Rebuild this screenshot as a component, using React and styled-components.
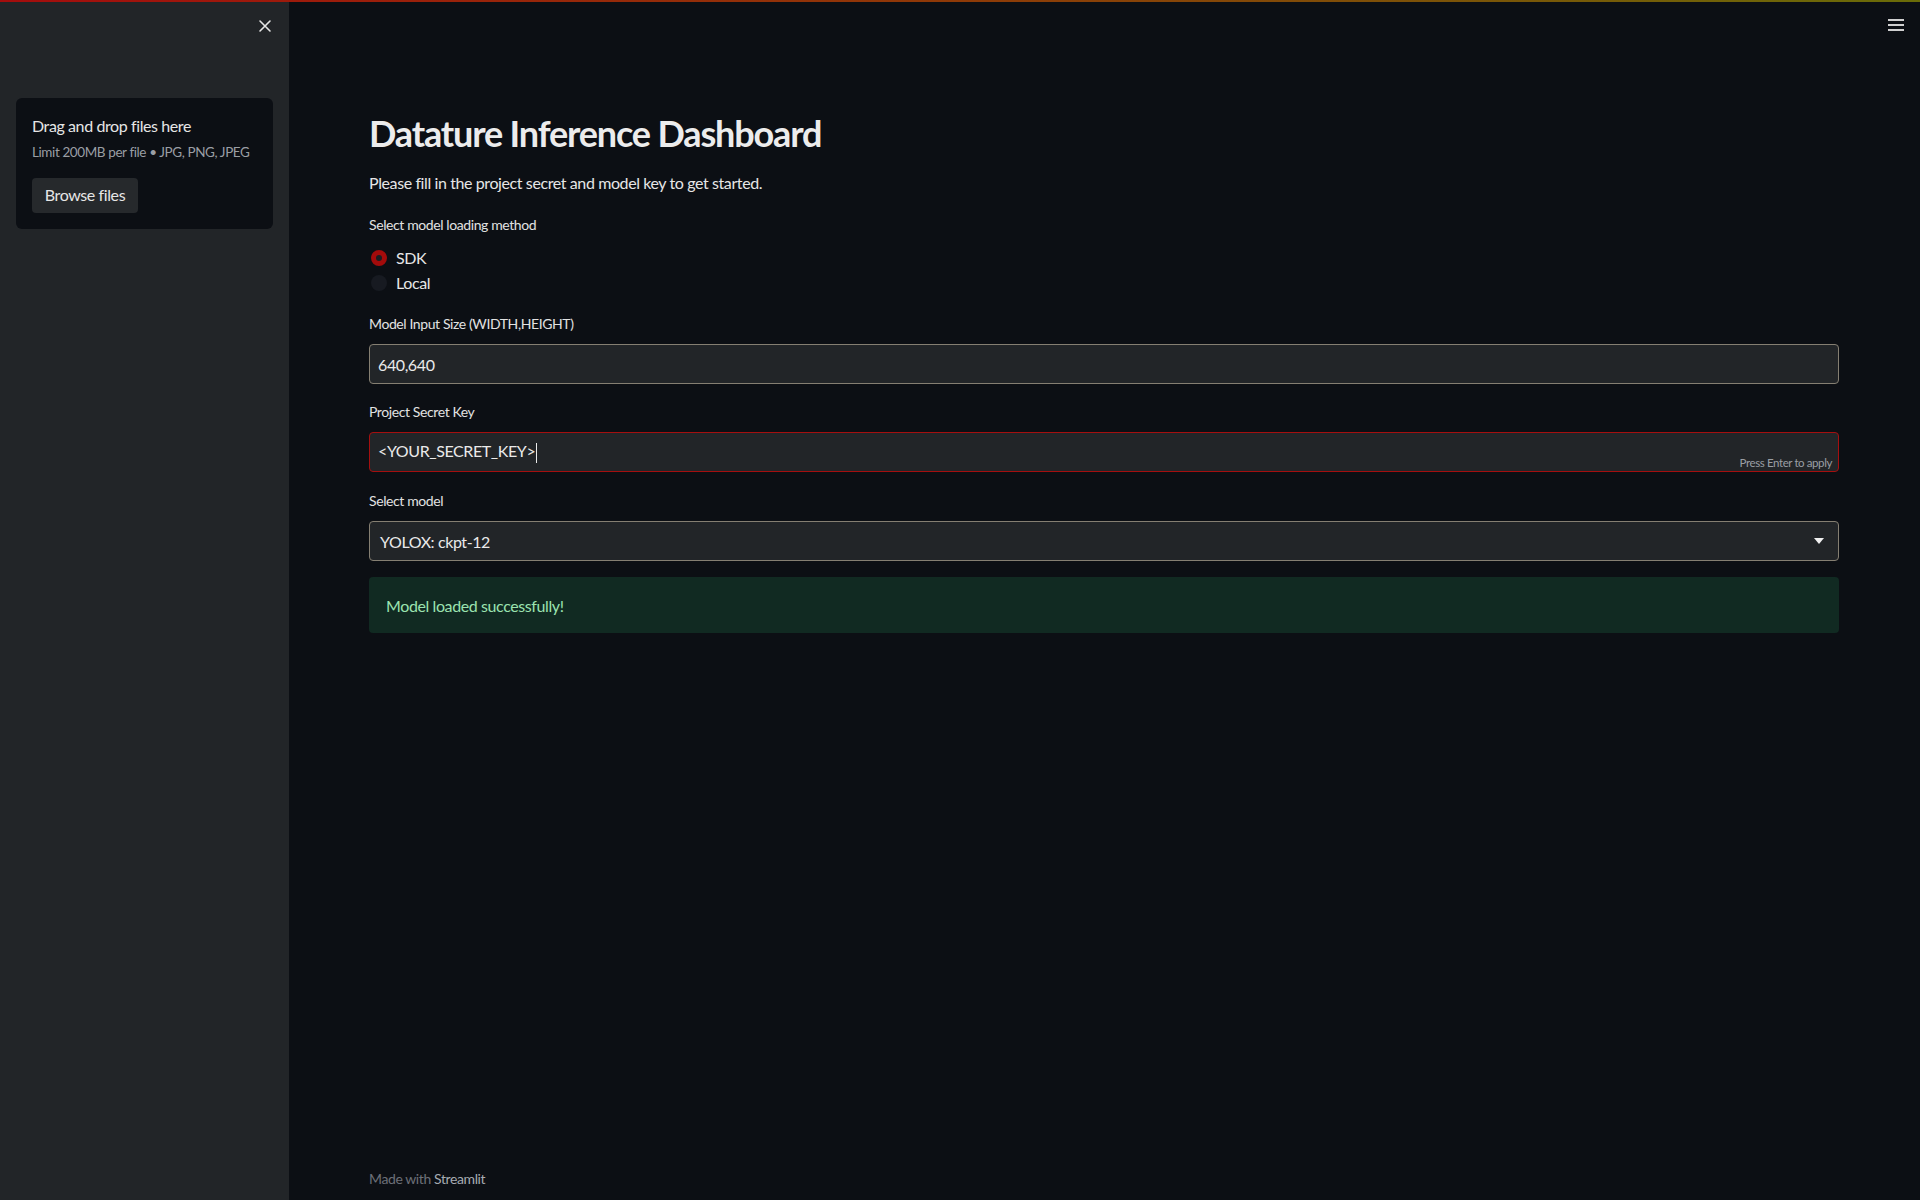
import React from 'react';
import styled, { createGlobalStyle } from 'styled-components';

const GlobalStyle = createGlobalStyle`
  html, body {
    margin: 0;
    padding: 0;
    background: #0c0f14;
  }
  body {
    font-family: Lato, "Open Sans", sans-serif;
    letter-spacing: -0.025em;
    color: #e6e6e6;
  }
  * {
    box-sizing: border-box;
  }
`;

const Page = styled.div`
  display: grid;
  grid-template-columns: 289px 1fr;
  min-height: 100vh;
  position: relative;
`;

const Decoration = styled.div`
  position: fixed;
  top: 0;
  left: 0;
  right: 0;
  height: 2px;
  background: linear-gradient(90deg, #a40d0d 0%, #8f3a07 50%, #6a6c08 100%);
  z-index: 5;
`;

const Sidebar = styled.aside`
  background: #222528;
  padding: 0 16px;
  display: flex;
  flex-direction: column;
`;

const SidebarHeader = styled.div`
  height: 98px;
  display: flex;
  justify-content: flex-end;
  align-items: flex-start;
  padding-top: 19px;
  padding-right: 1px;
`;

const CloseButton = styled.button`
  background: none;
  border: none;
  padding: 0;
  width: 14px;
  height: 14px;
  color: #e6e6e6;
  cursor: pointer;
  display: flex;
`;

const Uploader = styled.section`
  background: #0c0f14;
  border-radius: 6px;
  padding: 16px;
  display: flex;
  flex-direction: column;
  align-items: flex-start;
`;

const DropTitle = styled.div`
  font-size: 16px;
  line-height: 24px;
  color: #e6e6e6;
`;

const DropHint = styled.div`
  font-size: 13.5px;
  line-height: 20px;
  color: #9a9ea4;
  margin-top: 4px;
  white-space: nowrap;
`;

const BrowseButton = styled.button`
  margin-top: 16px;
  height: 35px;
  width: 106px;
  padding: 0 0 2px;
  border: none;
  border-radius: 4px;
  background: #26292c;
  color: #e6e6e6;
  font-family: inherit;
  letter-spacing: inherit;
  font-size: 16px;
  cursor: pointer;
`;

const Main = styled.main`
  display: flex;
  flex-direction: column;
  padding: 112px 81px 11px 80px;
  min-height: 100vh;
  position: relative;
`;

const MenuButton = styled.button`
  position: absolute;
  top: 19px;
  right: 16px;
  width: 16px;
  height: 12px;
  padding: 0;
  border: none;
  background: none;
  display: flex;
  flex-direction: column;
  justify-content: space-between;
  cursor: pointer;
`;

const MenuLine = styled.span`
  display: block;
  height: 2px;
  background: #d0d0d0;
`;

const Title = styled.h1`
  margin: 0;
  font-size: 36px;
  line-height: 43px;
  font-weight: 700;
  letter-spacing: -0.032em;
  color: #ececec;
`;

const Intro = styled.p`
  margin: 16px 0 0;
  font-size: 16px;
  line-height: 24px;
`;

const Field = styled.div`
  margin-top: ${p => p.$top || 18}px;
  display: flex;
  flex-direction: column;
`;

const Label = styled.label`
  font-size: 14px;
  line-height: 20px;
  margin-bottom: 10px;
  color: #e2e2e2;
`;

const RadioGroup = styled.div`
  display: flex;
  flex-direction: column;
`;

const RadioRow = styled.div`
  display: flex;
  align-items: center;
  height: 25px;
  font-size: 16px;
  gap: 9px;
  padding-left: 2px;
`;

const RadioDot = styled.span`
  width: 16px;
  height: 16px;
  border-radius: 50%;
  background: ${p => (p.$checked ? '#1a1d22' : '#171a21')};
  border: ${p => (p.$checked ? '5px solid #a30b0b' : 'none')};
`;

const InputBox = styled.div`
  position: relative;
  height: 40px;
  background: #222528;
  border: 1px solid ${p => (p.$invalid ? '#a50f0f' : '#857f72')};
  border-radius: 4px;
  display: flex;
  align-items: center;
  padding: 0 8px;
  font-size: 16px;
  color: #eaeaea;
`;

const Caret = styled.span`
  display: inline-block;
  width: 1px;
  height: 20px;
  background: #eaeaea;
  margin-left: 1px;
  vertical-align: middle;
`;

const InputHint = styled.span`
  position: absolute;
  right: 6px;
  bottom: 2px;
  font-size: 11.5px;
  color: #9a9ea4;
`;

const SelectBox = styled(InputBox)`
  justify-content: space-between;
  padding: 0 14px 0 10px;
`;

const Caretdown = styled.svg`
  width: 10px;
  height: 6px;
`;

const Success = styled.div`
  margin-top: 16px;
  height: 56px;
  background: #112a22;
  border-radius: 4px;
  display: flex;
  align-items: center;
  padding: 0 16px 0 17px;
  font-size: 16px;
  color: #9be3b0;
`;

const Footer = styled.footer`
  margin-top: auto;
  font-size: 14px;
  line-height: 20px;
  color: #6c7078;
`;

const FooterBrand = styled.span`
  color: #a7abb2;
`;

export default function App() {
  return (
    <>
      <GlobalStyle />
      <Decoration />
      <Page>
        <Sidebar>
          <SidebarHeader>
            <CloseButton aria-label="Close sidebar">
              <svg width="14" height="14" viewBox="0 0 14 14">
                <path d="M2 2 L12 12 M12 2 L2 12" stroke="#e6e6e6" strokeWidth="1.6" strokeLinecap="round" />
              </svg>
            </CloseButton>
          </SidebarHeader>
          <Uploader>
            <DropTitle>Drag and drop files here</DropTitle>
            <DropHint>Limit 200MB per file • JPG, PNG, JPEG</DropHint>
            <BrowseButton>Browse files</BrowseButton>
          </Uploader>
        </Sidebar>
        <Main>
          <MenuButton aria-label="Menu">
            <MenuLine />
            <MenuLine />
            <MenuLine />
          </MenuButton>
          <Title>Datature Inference Dashboard</Title>
          <Intro>Please fill in the project secret and model key to get started.</Intro>

          <Field $top={20}>
            <Label>Select model loading method</Label>
            <RadioGroup>
              <RadioRow><RadioDot $checked />SDK</RadioRow>
              <RadioRow><RadioDot />Local</RadioRow>
            </RadioGroup>
          </Field>

          <Field $top={19}>
            <Label>Model Input Size (WIDTH,HEIGHT)</Label>
            <InputBox>640,640</InputBox>
          </Field>

          <Field $top={18}>
            <Label>Project Secret Key</Label>
            <InputBox $invalid>
              <span>&lt;YOUR_SECRET_KEY&gt;<Caret /></span>
              <InputHint>Press Enter to apply</InputHint>
            </InputBox>
          </Field>

          <Field $top={19}>
            <Label>Select model</Label>
            <SelectBox>
              <span>YOLOX: ckpt-12</span>
              <Caretdown viewBox="0 0 10 6">
                <path d="M0 0 L10 0 L5 6 Z" fill="#f0f0f0" />
              </Caretdown>
            </SelectBox>
          </Field>

          <Success>Model loaded successfully!</Success>

          <Footer>
            Made with <FooterBrand>Streamlit</FooterBrand>
          </Footer>
        </Main>
      </Page>
    </>
  );
}
